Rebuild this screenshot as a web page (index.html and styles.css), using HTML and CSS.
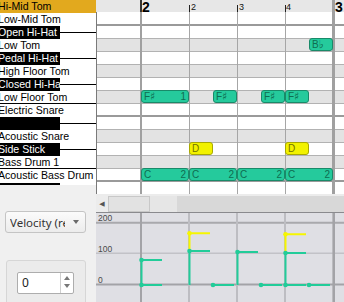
FILE: index.html
```html
<!DOCTYPE html>
<html lang="en">
<head>
    <meta charset="UTF-8">
    <meta name="viewport" content="width=device-width, initial-scale=1.0">
    <title>Drum Editor</title>
    <link rel="stylesheet" href="styles.css">
</head>
<body>
    <div class="app">
        <!-- left column: drum names + controls -->
        <div class="left">
            <div class="corner"></div>
            <div class="keys">
                <div class="key sel">Hi-Mid Tom</div>
                <div class="key">Low-Mid Tom</div>
                <div class="key black"><span class="name">Open Hi-Hat</span><span class="tail"></span></div>
                <div class="key">Low Tom</div>
                <div class="key black"><span class="name">Pedal Hi-Hat</span><span class="tail"></span></div>
                <div class="key">High Floor Tom</div>
                <div class="key black"><span class="name">Closed Hi-Hat</span><span class="tail"></span></div>
                <div class="key split">Low Floor Tom</div>
                <div class="key">Electric Snare</div>
                <div class="key black"><span class="name"></span><span class="tail"></span></div>
                <div class="key">Acoustic Snare</div>
                <div class="key black"><span class="name">Side Stick</span><span class="tail"></span></div>
                <div class="key split">Bass Drum 1</div>
                <div class="key">Acoustic Bass Drum</div>
            </div>
            <div class="key-peek"><span></span></div>
            <div class="side">
                <div class="combo">
                    <span class="combo-text">Velocity (relative)</span>
                    <i class="caret"></i>
                </div>
                <div class="group">
                    <div class="spin">
                        <span class="spin-val">0</span>
                        <div class="spin-btns">
                            <i class="up"></i>
                            <i class="down"></i>
                        </div>
                    </div>
                </div>
            </div>
        </div>

        <!-- right column: ruler, note grid, scrollbar, velocity lane -->
        <div class="right">
            <div class="ruler">
                <i class="mark" style="left:44px"></i>
                <span class="bar-num" style="left:46px">2</span>
                <i class="tick" style="left:93px"></i>
                <span class="num" style="left:95px">2</span>
                <i class="tick" style="left:141px"></i>
                <span class="num" style="left:143px">3</span>
                <i class="tick" style="left:189px"></i>
                <span class="num" style="left:190px">4</span>
                <i class="mark end" style="left:236px"></i>
                <span class="bar-num" style="left:239px">3</span>
            </div>

            <div class="grid">
                <div class="vlines">
                    <i class="edge" style="left:0"></i>
                    <i class="m" style="left:44px"></i>
                    <i style="left:93px"></i>
                    <i style="left:141px"></i>
                    <i style="left:189px"></i>
                    <i class="m" style="left:236px; width:3px"></i>
                </div>
                <div class="row first"></div>
                <div class="row oct"></div>
                <div class="row dark">
                    <div class="note" style="left:213px; width:24px"><span>B<span class="acc">♭</span></span></div>
                </div>
                <div class="row"></div>
                <div class="row dark"></div>
                <div class="row"></div>
                <div class="row dark">
                    <div class="note" style="left:45px; width:48px"><span>F<span class="acc">♯</span></span><span>1</span></div>
                    <div class="note" style="left:117px; width:24px"><span>F<span class="acc">♯</span></span></div>
                    <div class="note" style="left:165px; width:24px"><span>F<span class="acc">♯</span></span></div>
                    <div class="note" style="left:189px; width:24px"><span>F<span class="acc">♯</span></span></div>
                </div>
                <div class="row"></div>
                <div class="row oct"></div>
                <div class="row dark"></div>
                <div class="row">
                    <div class="note yel" style="left:93px; width:24px"><span>D</span></div>
                    <div class="note yel" style="left:189px; width:24px"><span>D</span></div>
                </div>
                <div class="row dark"></div>
                <div class="row">
                    <div class="note" style="left:45px; width:48px"><span>C</span><span>2</span></div>
                    <div class="note" style="left:93px; width:48px"><span>C</span><span>2</span></div>
                    <div class="note" style="left:141px; width:48px"><span>C</span><span>2</span></div>
                    <div class="note" style="left:189px; width:48px"><span>C</span><span>2</span></div>
                </div>
                <div class="row oct"></div>
            </div>

            <div class="hscroll">
                <div class="arrow">◀</div>
                <div class="thumb"></div>
                <div class="thumb-tail"></div>
            </div>

            <div class="velocity">
                <svg width="248" height="90" viewBox="0 0 248 90">
                    <rect width="248" height="90" fill="#dfdfe4"/>
                    <path d="M0 0.5H248" stroke="#8a8a8e" stroke-width="1"/>
                    <path d="M0 10.7H248" stroke="#a9a9ad" stroke-width="2"/>
                    <path d="M0 41.3H248" stroke="#c2c2c7" stroke-width="1.5"/>
                    <path d="M0 72.5H248" stroke="#a3a3a7" stroke-width="2"/>
                    <path d="M93 1V90M141 1V90M189 1V90" stroke="#bdbdc2" stroke-width="2"/>
                    <path d="M45 1V90" stroke="#a3a3a7" stroke-width="2"/>
                    <path d="M237.7 1V90" stroke="#a3a3a7" stroke-width="2.6"/>
                    <g class="vel-label">
                        <text x="2" y="8.5">200</text>
                        <text x="2" y="39.5">100</text>
                        <text x="2" y="70.5">0</text>
                    </g>
                    <!-- yellow: acoustic snare -->
                    <g stroke="#f6f600" stroke-width="2" fill="none">
                        <path d="M93.5 21.3V39M93.5 21.3H114"/>
                        <path d="M189.5 22.3V41M189.5 22.3H210"/>
                    </g>
                    <g fill="#f6f600">
                        <circle cx="93.5" cy="21.3" r="2.3"/>
                        <circle cx="189.5" cy="22.3" r="2.3"/>
                    </g>
                    <!-- green: hi-hats + bass drum -->
                    <g stroke="#22cc99" stroke-width="2" fill="none">
                        <path d="M45.5 48V73M45.5 48H66M45.5 73H66"/>
                        <path d="M93.5 39V73M93.5 39H114"/>
                        <path d="M117 73H138"/>
                        <path d="M141.5 40V73M141.5 40H162"/>
                        <path d="M165 73H186"/>
                        <path d="M189.5 41V73M189.5 41H210M189.5 73H210"/>
                        <path d="M213 73H234"/>
                    </g>
                    <g fill="#22cc99">
                        <circle cx="45.5" cy="48" r="2.3"/>
                        <circle cx="45.5" cy="73" r="2.3"/>
                        <circle cx="93.5" cy="39" r="2.3"/>
                        <circle cx="117" cy="73" r="2.3"/>
                        <circle cx="141.5" cy="40" r="2.3"/>
                        <circle cx="165" cy="73" r="2.3"/>
                        <circle cx="189.5" cy="41" r="2.3"/>
                        <circle cx="189.5" cy="73" r="2.3"/>
                        <circle cx="213" cy="73" r="2.3"/>
                    </g>
                </svg>
            </div>
        </div>
    </div>
</body>
</html>
```

FILE: styles.css
```css
* {
    box-sizing: border-box;
}
html, body {
    margin: 0;
    padding: 0;
}
body {
    width: 344px;
    height: 302px;
    overflow: hidden;
    font-family: "Liberation Sans", Arial, "DejaVu Sans", sans-serif;
    background-color: #f0f0f0;
}
.app {
    display: grid;
    grid-template-columns: 96px 248px;
    height: 302px;
}
.left, .right {
    display: flex;
    flex-direction: column;
    overflow: hidden;
}

/* drum names */
.corner {
    height: 12px;
    background-color: #e7e7e7;
}
.keys {
    height: 182px;
    background-color: #fff;
}
.key {
    height: 13px;
    display: flex;
    align-items: center;
    font-size: 10.6px;
    line-height: 13px;
    white-space: nowrap;
    overflow: hidden;
    text-indent: -2px;
    color: #000;
}
.key.sel {
    background-color: #e2a91e;
}
.key.split {
    border-bottom: 1px solid #000;
}
.key.black .name {
    flex: none;
    width: 60px;
    height: 13px;
    background-color: #000;
    color: #fff;
    overflow: hidden;
}
.key.black .tail {
    flex: 1;
    height: 1px;
    background-color: #000;
}
.key-peek {
    height: 3px;
    padding-top: 1px;
    background-color: #fff;
}
.key-peek span {
    display: block;
    width: 60px;
    height: 2px;
    background-color: #000;
}

/* controls under the names */
.side {
    flex: 1;
    padding: 26px 0 0 5px;
    background-color: #f0f0f0;
    font-family: "Noto Sans", "Open Sans", sans-serif;
}
.combo {
    width: 81px;
    height: 22px;
    display: flex;
    align-items: center;
    padding-left: 4px;
    border: 1px solid #c4c4c4;
    border-radius: 3px;
    background: linear-gradient(#fbfbfb, #ececec);
    font-size: 11.5px;
    color: #333;
}
.combo-text {
    width: 55px;
    overflow: hidden;
    white-space: nowrap;
}
.caret {
    margin-left: 8px;
    border-left: 3.5px solid transparent;
    border-right: 3.5px solid transparent;
    border-top: 4px solid #6a6a6a;
}
.group {
    width: 80px;
    height: 60px;
    margin: 27px 0 0 1px;
    padding: 11px 0 0 10px;
    border: 1px solid #d6d6d6;
    border-radius: 3px;
    background-color: #ebebeb;
}
.spin {
    width: 57px;
    height: 22px;
    display: flex;
    border: 1px solid #adadad;
    border-radius: 2px;
    background-color: #fff;
}
.spin-val {
    flex: 1;
    padding-left: 4px;
    font-size: 12px;
    line-height: 20px;
    color: #222;
}
.spin-btns {
    width: 13px;
    display: flex;
    flex-direction: column;
    align-items: center;
    border-left: 1px solid #cfcfcf;
}
.spin-btns .up {
    margin-top: 3px;
    border-left: 3px solid transparent;
    border-right: 3px solid transparent;
    border-bottom: 4px solid #777;
}
.spin-btns .down {
    margin-top: 4px;
    border-left: 3px solid transparent;
    border-right: 3px solid transparent;
    border-top: 4px solid #777;
}

/* time ruler */
.ruler {
    position: relative;
    height: 12px;
    background-color: #e7e7e7;
}
.ruler .mark {
    position: absolute;
    top: 0;
    width: 2px;
    height: 12px;
    background-color: #333;
}
.ruler .mark.end {
    width: 3px;
    background-color: #a0a0a0;
}
.ruler .tick {
    position: absolute;
    top: 5px;
    width: 1px;
    height: 7px;
    background-color: #222;
}
.ruler .num {
    position: absolute;
    top: 2px;
    font-size: 9px;
    line-height: 10px;
    color: #111;
}
.ruler .bar-num {
    position: absolute;
    top: 0;
    font-size: 14px;
    font-weight: bold;
    line-height: 14px;
    color: #000;
}

/* note grid */
.grid {
    position: relative;
    height: 182px;
}
.row {
    position: relative;
    height: 13px;
    border-top: 1px solid #b2b2b2;
    background-color: #fff;
}
.row.first {
    border-top: none;
}
.row.dark {
    background-color: #e3e3e3;
}
.row.oct {
    border-top-color: #9a9a9a;
    box-shadow: 0 -1px 0 #9a9a9a;
}
.vlines {
    position: absolute;
    top: 0;
    left: 0;
    right: 0;
    bottom: 0;
    z-index: 1;
    pointer-events: none;
}
.vlines i {
    position: absolute;
    top: 0;
    bottom: 0;
    width: 1px;
    background-color: #a6a6a6;
}
.vlines i.m {
    width: 2px;
    background-color: #a0a0a0;
}
.vlines i.edge {
    background-color: #7a7a7a;
}
.note {
    position: absolute;
    top: -1px;
    height: 13px;
    z-index: 2;
    display: flex;
    justify-content: space-between;
    align-items: center;
    padding: 0 2px;
    border: 1px solid #198a69;
    border-radius: 3px;
    background-color: #25ca9c;
    font-family: "Liberation Sans", "DejaVu Sans", sans-serif;
    font-size: 10px;
    line-height: 11px;
    color: #0f6d51;
    overflow: hidden;
    white-space: nowrap;
}
.note .acc {
    font-family: "DejaVu Sans", sans-serif;
    font-size: 11px;
}
.note.yel {
    border-color: #a9a900;
    background-color: #f2f200;
    color: #727200;
}

/* scrollbar */
.hscroll {
    height: 18px;
    display: flex;
    border-top: 2px solid #ececec;
    background-color: #d8d8d8;
}
.hscroll .arrow {
    width: 12px;
    display: flex;
    align-items: center;
    justify-content: center;
    background-color: #ececec;
    font-family: "DejaVu Sans", sans-serif;
    font-size: 7px;
    color: #555;
}
.hscroll .thumb {
    width: 42px;
    border: 1px solid #c8c8c8;
    background-color: #e2e2e2;
}
.hscroll .thumb-tail {
    width: 27px;
    background-color: #e6e6e6;
}

/* velocity lane */
.velocity {
    height: 90px;
}
.velocity svg {
    display: block;
}
.vel-label text {
    font-family: "Liberation Sans", Arial, sans-serif;
    font-size: 8.5px;
    fill: #4a4a4a;
}
```
